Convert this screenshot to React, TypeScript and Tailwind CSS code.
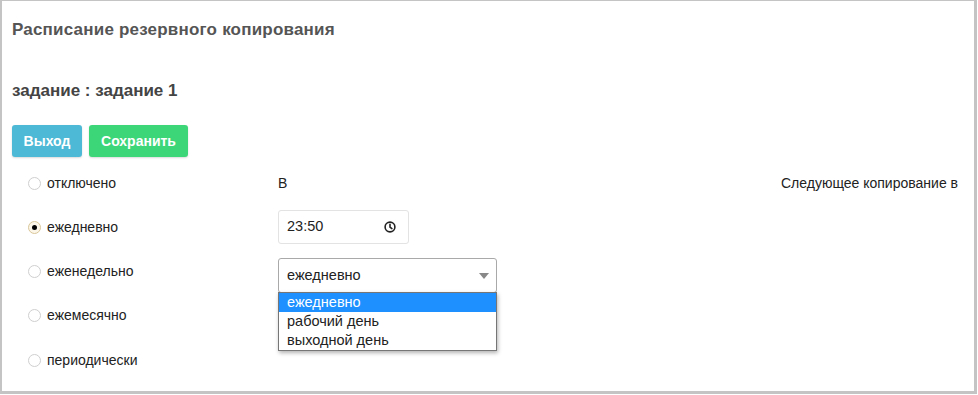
import React from "react";

function Radio({ checked }: { checked?: boolean }) {
  return (
    <span
      className={
        checked
          ? "flex h-[13px] w-[13px] items-center justify-center rounded-full border border-[#d9c79a] bg-[#fbf6e8]"
          : "flex h-[13px] w-[13px] items-center justify-center rounded-full border border-[#cfcfcf] bg-white"
      }
    >
      {checked && <span className="h-[5px] w-[5px] rounded-full bg-black" />}
    </span>
  );
}

function RadioRow({ label, checked, h }: { label: string; checked?: boolean; h: string }) {
  return (
    <div className={`flex items-center gap-[6px] pl-[16px] ${h}`}>
      <Radio checked={checked} />
      <span className="text-[14px] text-[#222]">{label}</span>
    </div>
  );
}

export default function App() {
  return (
    <div className="h-[395px] w-[978px] bg-white font-['Liberation_Sans',Arial,sans-serif]">
      <div className="h-[394px] w-[977px] border-b-[3px] border-l-2 border-r-[3px] border-t border-[#c4c4c4] pl-[10px] pr-[16px]">
        <div className="pt-[19px] text-[17px] font-bold leading-[20px] tracking-[0.2px] text-[#555]">
          Расписание резервного копирования
        </div>
        <div className="mt-[41px] text-[17px] font-bold leading-[20px] text-[#444]">
          задание : задание 1
        </div>
        <div className="mt-[24px] flex gap-[7px]">
          <button className="h-[32px] w-[70px] rounded-[3px] bg-[#4db9d6] text-[14px] font-bold text-white shadow-[0_1px_2px_rgba(0,0,0,0.15)]">
            Выход
          </button>
          <button className="h-[32px] w-[99px] rounded-[3px] bg-[#3cd679] text-[14px] font-bold text-white shadow-[0_1px_2px_rgba(0,0,0,0.15)]">
            Сохранить
          </button>
        </div>
        <div className="mt-[4px] flex">
          <div className="flex w-[266px] flex-col">
            <RadioRow label="отключено" h="h-[44px]" />
            <RadioRow label="ежедневно" checked h="h-[44px]" />
            <RadioRow label="еженедельно" h="h-[44px]" />
            <RadioRow label="ежемесячно" h="h-[45px]" />
            <RadioRow label="периодически" h="h-[45px]" />
          </div>
          <div className="flex w-[219px] flex-col">
            <div className="flex h-[44px] items-center text-[14px] text-[#222]">В</div>
            <div className="mt-[5px] flex h-[34px] w-[131px] items-center justify-between rounded-[3px] border border-[#e3e3e3] pl-[8px] pr-[12px] text-[14.5px] text-[#222]">
              <span>23:50</span>
              <svg width="12" height="12" viewBox="0 0 12 12" fill="none" stroke="#222" strokeWidth="1.6">
                <circle cx="6" cy="6" r="4.9" />
                <path d="M6 3.2V6.2L7.9 7.6" strokeLinecap="round" />
              </svg>
            </div>
            <div className="relative mt-[14px]">
              <div className="flex h-[35px] w-[219px] items-center justify-between rounded-[3px] border border-[#a9a9a9] pl-[8px] pr-[7px] text-[14.5px] text-[#222]">
                <span>ежедневно</span>
                <svg width="10" height="6" viewBox="0 0 10 6">
                  <path d="M0 0H10L5 6Z" fill="#888" />
                </svg>
              </div>
              <div className="absolute left-0 top-[34px] w-[219px] border border-[#767676] bg-white py-0 text-[14.5px] leading-[19px] text-[#222] shadow-[1px_2px_4px_rgba(0,0,0,0.3)]">
                <div className="bg-[#1e90ff] pl-[8px] text-white">ежедневно</div>
                <div className="pl-[8px]">рабочий день</div>
                <div className="pl-[8px]">выходной день</div>
              </div>
            </div>
          </div>
          <div className="flex h-[44px] flex-1 items-center justify-end text-[14px] text-[#222]">
            Следующее копирование в
          </div>
        </div>
      </div>
    </div>
  );
}
